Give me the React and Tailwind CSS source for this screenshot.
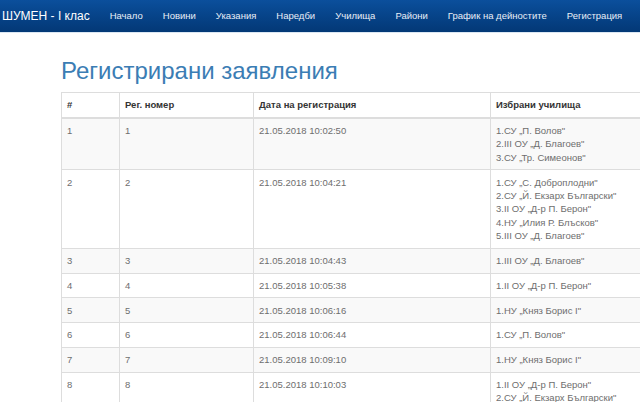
const navLinks = [
  'Начало',
  'Новини',
  'Указания',
  'Наредби',
  'Училища',
  'Райони',
  'График на дейностите',
  'Регистрация',
]

const rows = [
  { n: 1, reg: 1, date: '21.05.2018 10:02:50', schools: ['1.СУ „П. Волов"', '2.III ОУ „Д. Благоев"', '3.СУ „Тр. Симеонов"'] },
  { n: 2, reg: 2, date: '21.05.2018 10:04:21', schools: ['1.СУ „С. Доброплодни"', '2.СУ „Й. Екзарх Български"', '3.II ОУ „Д-р П. Берон"', '4.НУ „Илия Р. Блъсков"', '5.III ОУ „Д. Благоев"'] },
  { n: 3, reg: 3, date: '21.05.2018 10:04:43', schools: ['1.III ОУ „Д. Благоев"'] },
  { n: 4, reg: 4, date: '21.05.2018 10:05:38', schools: ['1.II ОУ „Д-р П. Берон"'] },
  { n: 5, reg: 5, date: '21.05.2018 10:06:16', schools: ['1.НУ „Княз Борис I"'] },
  { n: 6, reg: 6, date: '21.05.2018 10:06:44', schools: ['1.СУ „П. Волов"'] },
  { n: 7, reg: 7, date: '21.05.2018 10:09:10', schools: ['1.НУ „Княз Борис I"'] },
  { n: 8, reg: 8, date: '21.05.2018 10:10:03', schools: ['1.II ОУ „Д-р П. Берон"', '2.СУ „Й. Екзарх Български"'] },
]

const cell = 'border border-[#dddddd] px-[5px] py-[5.2px] align-top'

export default function App() {
  return (
    <div className="w-[640px] h-[402px] overflow-hidden bg-white font-['Liberation_Sans',Arial,sans-serif]">
      {/* Navbar */}
      <div className="h-[33px] bg-gradient-to-b from-[#0b4f9c] to-[#033876] border-b border-[#dbe7f3] flex items-center">
        <div className="pl-[2px] pr-[10px] text-[12px] text-white">ШУМЕН - I клас</div>
        <nav className="flex">
          {navLinks.map((l) => (
            <a key={l} className="px-[10px] text-[9.5px] text-[#e8eef7]">
              {l}
            </a>
          ))}
        </nav>
      </div>

      {/* Content */}
      <div className="pl-[61px]">
        <h1 className="mt-[23px] mb-[6px] text-[24px] leading-[30px] text-[#3b7db4] font-normal">
          Регистрирани заявления
        </h1>
        <table className="w-[700px] border-collapse table-fixed text-[9.5px] leading-[13.4px] text-[#6e6e6e]">
          <colgroup>
            <col className="w-[58px]" />
            <col className="w-[134px]" />
            <col className="w-[237px]" />
            <col />
          </colgroup>
          <thead>
            <tr className="text-left text-[#333333] font-bold">
              <th className={`${cell} border-b-2`}>#</th>
              <th className={`${cell} border-b-2`}>Рег. номер</th>
              <th className={`${cell} border-b-2`}>Дата на регистрация</th>
              <th className={`${cell} border-b-2`}>Избрани училища</th>
            </tr>
          </thead>
          <tbody>
            {rows.map((r, i) => (
              <tr key={r.n} className={i % 2 === 0 ? 'bg-[#f9f9f9]' : 'bg-white'}>
                <td className={cell}>{r.n}</td>
                <td className={cell}>{r.reg}</td>
                <td className={cell}>{r.date}</td>
                <td className={cell}>
                  {r.schools.map((s) => (
                    <div key={s}>{s}</div>
                  ))}
                </td>
              </tr>
            ))}
          </tbody>
        </table>
      </div>
    </div>
  )
}
